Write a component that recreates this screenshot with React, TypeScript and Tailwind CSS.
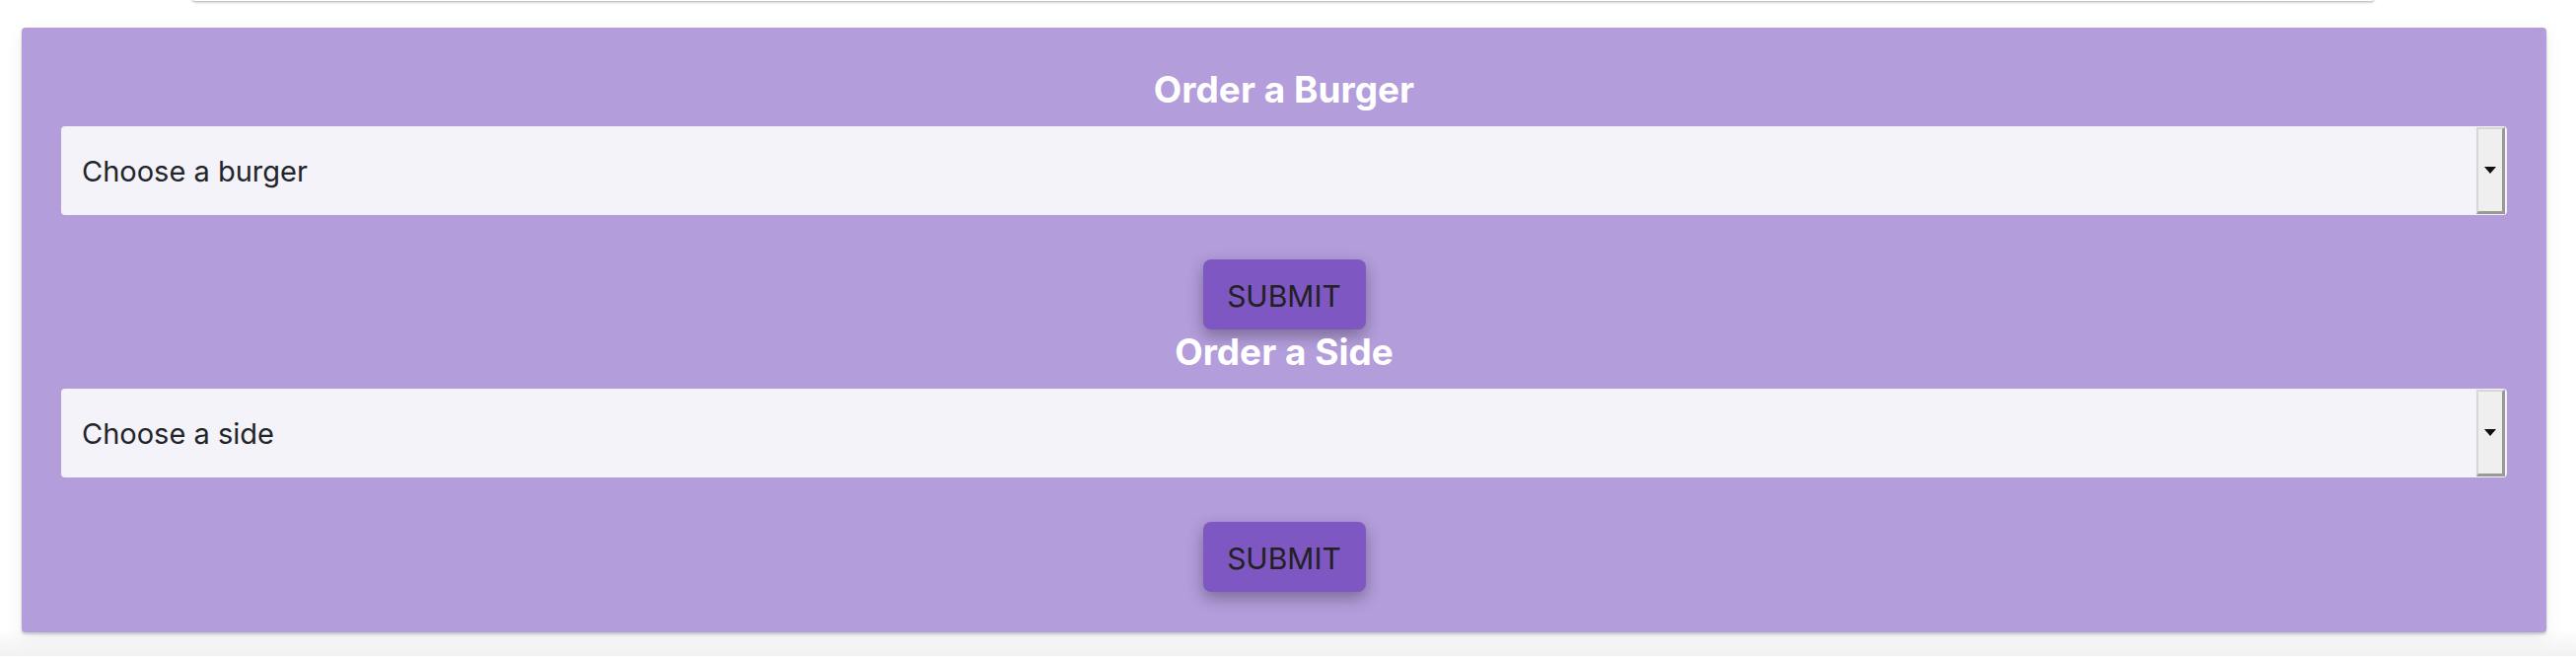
import React from "react";

const forms = [
  { title: "Order a Burger", placeholder: "Choose a burger" },
  { title: "Order a Side", placeholder: "Choose a side" },
];

function FakeSelect({ placeholder }: { placeholder: string }) {
  return (
    <div className="flex h-[90px] items-center justify-between rounded-[4px] bg-[#f5f3fa] pl-[21px] pr-[2px]">
      <span className="pt-[2px] text-[29px] text-[#212529]">{placeholder}</span>
      {/* native-looking dropdown button */}
      <div className="flex h-[88px] w-[29px] items-center justify-center border-t-[2px] border-l-[2px] border-r-[3px] border-b-[3px] border-t-[#d6d6d6] border-l-[#d6d6d6] border-r-[#999] border-b-[#999] bg-[#efefef]">
        <svg width="12" height="7" viewBox="0 0 12 7">
          <path d="M0 0h12L6 7z" fill="#111" />
        </svg>
      </div>
    </div>
  );
}

export default function App() {
  return (
    <div className="min-h-[666px] bg-[linear-gradient(to_bottom,#ffffff_96%,#f1f1f1)] font-['Inter',sans-serif] pb-[24px]">
      {/* bottom edge of the panel above */}
      <div className="-mt-[5px] ml-[195px] h-[6px] w-[2212px] rounded-b-[3px] bg-white shadow-[0_1px_3px_rgba(0,0,0,0.35)]" />

      {/* CARD */}
      <div className="ml-[22px] mt-[27px] w-[2560px] rounded-[4px] bg-[#b39ddb] px-[40px] pt-[40px] pb-[41px] shadow-[0_2px_3px_rgba(0,0,0,0.2),0_6px_20px_rgba(0,0,0,0.06)]">
        {forms.map((f) => (
          <form key={f.title} onSubmit={(e) => e.preventDefault()}>
            <h5 className="mb-[15px] text-center text-[37px] font-bold leading-[45px] text-white">
              {f.title}
            </h5>
            <FakeSelect placeholder={f.placeholder} />
            <button className="mx-auto mt-[45px] block h-[71px] w-[165px] rounded-[8px] bg-[#7e57c2] pt-[4px] text-[30px] text-[#212121] shadow-[0_6px_16px_rgba(0,0,0,0.32)]">
              SUBMIT
            </button>
          </form>
        ))}
      </div>
    </div>
  );
}
